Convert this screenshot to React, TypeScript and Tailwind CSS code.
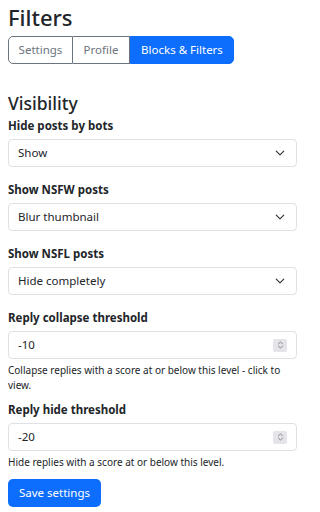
import React from 'react';

const font = { fontFamily: '"Noto Sans", "Open Sans", sans-serif' };

const Chevron = () => (
  <svg viewBox="0 0 16 16" className="w-[10px] h-[10px]" fill="none">
    <path d="m2 5 6 6 6-6" stroke="#343a40" strokeWidth="2" strokeLinecap="round" strokeLinejoin="round" />
  </svg>
);

const Spinner = () => (
  <div className="w-[14px] h-[13px] bg-[#e4e4e9] rounded-[2px] flex items-center justify-center">
    <svg viewBox="0 0 10 12" className="w-[7px] h-[10px]" fill="none">
      <path d="M2 4.5 5 1.5 8 4.5M2 7.5 5 10.5 8 7.5" stroke="#75757c" strokeWidth="1.2" strokeLinecap="round" strokeLinejoin="round" />
    </svg>
  </div>
);

const SelectField: React.FC<{ label: string; value: string }> = ({ label, value }) => (
  <div className="mb-[15px]">
    <label className="block text-[11.5px] leading-[16px] font-bold text-[#212529] mb-[5px]">{label}</label>
    <div className="h-[28px] border border-[#dee2e6] rounded-[4px] bg-white flex items-center justify-between pl-[9px] pr-[11px]">
      <span className="text-[11.5px] text-[#212529]">{value}</span>
      <Chevron />
    </div>
  </div>
);

const NumberField: React.FC<{ label: string; value: string; help: string }> = ({ label, value, help }) => (
  <div className="mb-[9px]">
    <label className="block text-[11.5px] leading-[16px] font-bold text-[#212529] mb-[5px]">{label}</label>
    <div className="h-[28px] border border-[#dee2e6] rounded-[4px] bg-white flex items-center justify-between pl-[9px] pr-[9px]">
      <span className="text-[11.5px] text-[#212529]">{value}</span>
      <Spinner />
    </div>
    <p className="mt-[4px] text-[10px] leading-[15px] text-[#212529]">{help}</p>
  </div>
);

export default function App() {
  return (
    <div className="w-[305px] h-[512px] bg-white px-[8px] pt-[4px] overflow-hidden" style={font}>
      <h1 className="text-[22px] leading-[26px] font-medium text-[#212529] mb-[6px]">Filters</h1>

      <div className="flex h-[28px] w-[226px] text-[11.5px]">
        <button className="w-[65px] border border-[#6c757d] rounded-l-[5px] text-[#6c757d]">Settings</button>
        <button className="w-[57px] border border-l-0 border-[#6c757d] text-[#6c757d]">Profile</button>
        <button className="w-[104px] bg-[#0d6efd] border border-[#0d6efd] rounded-r-[5px] text-white">Blocks &amp; Filters</button>
      </div>

      <h2 className="mt-[29px] text-[17.5px] leading-[21px] font-medium text-[#212529] mb-[4px]">Visibility</h2>

      <SelectField label="Hide posts by bots" value="Show" />
      <SelectField label="Show NSFW posts" value="Blur thumbnail" />
      <SelectField label="Show NSFL posts" value="Hide completely" />

      <NumberField
        label="Reply collapse threshold"
        value="-10"
        help="Collapse replies with a score at or below this level - click to view."
      />
      <NumberField
        label="Reply hide threshold"
        value="-20"
        help="Hide replies with a score at or below this level."
      />

      <button className="h-[28px] w-[93px] rounded-[5px] bg-[#0d6efd] text-white text-[11.5px]">Save settings</button>
    </div>
  );
}
